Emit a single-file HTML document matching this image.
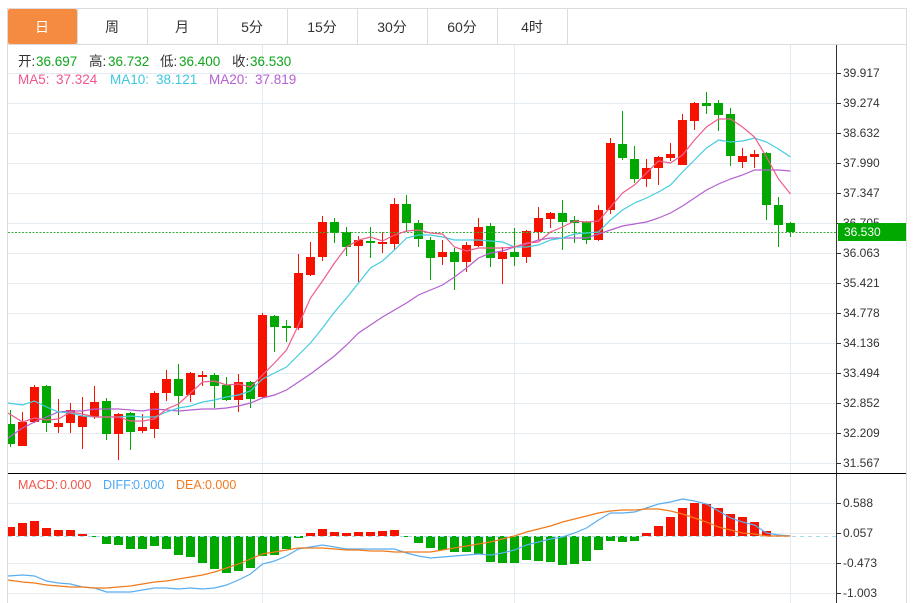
<!DOCTYPE html>
<html><head><meta charset="utf-8"><style>
html,body{margin:0;padding:0;background:#fff;width:915px;height:603px;overflow:hidden}
svg{display:block}
text{font-family:"Liberation Sans","Noto Sans CJK SC",sans-serif}
.t{font-size:14px;fill:#333;text-anchor:middle}
.a{font-size:12px;fill:#333}
.l{font-size:13.5px}
</style></head><body>
<svg width="915" height="603" viewBox="0 0 915 603" xmlns="http://www.w3.org/2000/svg">
<defs><clipPath id="c"><rect x="8" y="45" width="828" height="558"/></clipPath></defs>
<rect width="915" height="603" fill="#fff"/>
<!-- grid -->
<path d="M8 73.5H836M8 103.5H836M8 133.5H836M8 163.5H836M8 193.5H836M8 223.5H836M8 253.5H836M8 283.5H836M8 313.5H836M8 343.5H836M8 373.5H836M8 403.5H836M8 433.5H836M8 463.5H836M8 503.5H836M8 533.5H836M8 563.5H836M8 593.5H836M262.5 45V603M514.5 45V603M790.5 45V603" stroke="#e4ebf1" stroke-width="1" fill="none"/>
<!-- frame -->
<path d="M7 8.5H907M7.5 8V603M906.5 8V603M8 44.5H907M77.5 9V44M147.5 9V44M217.5 9V44M287.5 9V44M357.5 9V44M427.5 9V44M497.5 9V44M567.5 9V44" stroke="#dcdcdc" stroke-width="1" fill="none"/>
<rect x="8" y="9" width="69" height="35" rx="2" fill="#f58b41"/>
<text class="t" x="42" y="32" style="fill:#fff">日</text>
<text class="t" x="112" y="32">周</text>
<text class="t" x="182" y="32">月</text>
<text class="t" x="252" y="32">5分</text>
<text class="t" x="322" y="32">15分</text>
<text class="t" x="392" y="32">30分</text>
<text class="t" x="462" y="32">60分</text>
<text class="t" x="532" y="32">4时</text>
<!-- candles -->
<g clip-path="url(#c)">
<path fill="none" stroke="#f51300" stroke-width="1" d="M22.5 412V446M34.5 385V423M58.5 399V433M70.5 403V433M82.5 397V449M94.5 386V419M118.5 413V460M142.5 414V433M154.5 391V438M166.5 370V401M190.5 372V402M202.5 371V386M238.5 374V412M262.5 313V398M298.5 254V330M310.5 242V276M322.5 216V261M358.5 236V282M382.5 232V253M394.5 198V250M442.5 240V265M466.5 242V272M478.5 218V247M502.5 247V284M526.5 230V263M538.5 207V240M550.5 212V228M598.5 205V241M610.5 138V214M646.5 159V187M658.5 156V185M670.5 143V161M682.5 114V165M694.5 102V130M742.5 148V168M754.5 150V168"/>
<path fill="none" stroke="#00a800" stroke-width="1" d="M10.5 410V447M46.5 385V432M106.5 398V440M130.5 412V450M178.5 364V415M214.5 373V408M226.5 377V401M250.5 381V408M274.5 315V352M286.5 320V342M334.5 218V243M346.5 227V256M370.5 227V258M406.5 195V232M418.5 220V247M430.5 237V280M454.5 248V290M490.5 223V267M514.5 228V266M562.5 200V250M574.5 216V243M586.5 221V244M622.5 111V160M634.5 146V183M706.5 92V114M718.5 100V131M730.5 108V166M766.5 152V220M778.5 197V247M790.5 222V237"/>
<path fill="#f51300" d="M18 422h9v24h-9zM30 387h9v35h-9zM54 423h9v4h-9zM66 410h9v13h-9zM78 416h9v11h-9zM90 402h9v15h-9zM114 414h9v20h-9zM138 427h9v4h-9zM150 393h9v36h-9zM162 379h9v14h-9zM186 373h9v22h-9zM198 375h9v2h-9zM234 382h9v18h-9zM258 315h9v82h-9zM294 273h9v55h-9zM306 257h9v18h-9zM318 222h9v35h-9zM354 240h9v6h-9zM378 242h9v2h-9zM390 204h9v40h-9zM438 252h9v5h-9zM462 245h9v17h-9zM474 227h9v19h-9zM498 252h9v7h-9zM522 231h9v26h-9zM534 218h9v14h-9zM546 213h9v6h-9zM594 210h9v30h-9zM606 143h9v67h-9zM642 168h9v11h-9zM654 157h9v11h-9zM666 154h9v4h-9zM678 120h9v45h-9zM690 103h9v18h-9zM738 156h9v6h-9zM750 154h9v3h-9z"/>
<path fill="#00a800" d="M8 424h7v20h-7zM42 386h9v37h-9zM102 401h9v33h-9zM126 413h9v19h-9zM174 379h9v17h-9zM210 375h9v11h-9zM222 385h9v15h-9zM246 382h9v17h-9zM270 316h9v11h-9zM282 326h9v2h-9zM330 222h9v11h-9zM342 232h9v15h-9zM366 241h9v2h-9zM402 204h9v19h-9zM414 223h9v16h-9zM426 240h9v18h-9zM450 252h9v10h-9zM486 226h9v32h-9zM510 252h9v5h-9zM558 213h9v9h-9zM570 220h9v3h-9zM582 222h9v18h-9zM618 144h9v14h-9zM630 159h9v20h-9zM702 103h9v3h-9zM714 103h9v12h-9zM726 114h9v42h-9zM762 153h9v52h-9zM774 205h9v20h-9zM786 223h9v9h-9z"/>
<!-- price line -->
<path d="M8 232.5H836" stroke="#35b035" stroke-width="1" stroke-dasharray="2 1.5" fill="none"/>
<!-- MA -->
<polyline fill="none" stroke="#b45fcf" stroke-width="1.2" points="8,438 22.5,428 34.5,422 46.5,417 58.5,412 70.5,411 82.5,411 94.5,409 106.5,409 118.5,409 130.5,410 142.5,411 154.5,409 166.5,410 178.5,411 190.5,410 202.5,409 214.5,409 226.5,408 238.5,406 250.5,403 262.5,398 274.5,395 286.5,390 298.5,382 310.5,374 322.5,365 334.5,356 346.5,345 358.5,333 370.5,325 382.5,317 394.5,310 406.5,303 418.5,295 430.5,290 442.5,285 454.5,277 466.5,268 478.5,258 490.5,253 502.5,251 514.5,247 526.5,244 538.5,240 550.5,238 562.5,238 574.5,238 586.5,238 598.5,234 610.5,230 622.5,226 634.5,224 646.5,222 658.5,218 670.5,213 682.5,206 694.5,198 706.5,190 718.5,184 730.5,179 742.5,175 754.5,170 766.5,170 778.5,170 790.5,171"/>
<polyline fill="none" stroke="#45cde0" stroke-width="1.2" points="8,403 22.5,405 34.5,401 46.5,407 58.5,412 70.5,413 82.5,416 94.5,417 106.5,417 118.5,417 130.5,416 142.5,417 154.5,417 166.5,412 178.5,408 190.5,406 202.5,402 214.5,400 226.5,397 238.5,395 250.5,391 262.5,379 274.5,373 286.5,367 298.5,355 310.5,343 322.5,328 334.5,312 346.5,298 358.5,283 370.5,268 382.5,261 394.5,250 406.5,238 418.5,235 430.5,235 442.5,237 454.5,240 466.5,240 478.5,240 490.5,241 502.5,242 514.5,247 526.5,247 538.5,245 550.5,240 562.5,238 574.5,234 586.5,233 598.5,232 610.5,220 622.5,210 634.5,203 646.5,198 658.5,192 670.5,185 682.5,172 694.5,160 706.5,148 718.5,140 730.5,142 742.5,141 754.5,138 766.5,142 778.5,149 790.5,157"/>
<polyline fill="none" stroke="#ef5c8e" stroke-width="1.2" points="8,413 22.5,422 34.5,418 46.5,420 58.5,419 70.5,412 82.5,414 94.5,417 106.5,417 118.5,417 130.5,421 142.5,421 154.5,419 166.5,409 178.5,404 190.5,393 202.5,382 214.5,381 226.5,385 238.5,384 250.5,387 262.5,375 274.5,363 286.5,350 298.5,325 310.5,298 322.5,281 334.5,263 346.5,247 358.5,240 370.5,237 382.5,241 394.5,235 406.5,231 418.5,230 430.5,233 442.5,234 454.5,247 466.5,251 478.5,248 490.5,248 502.5,248 514.5,247 526.5,243 538.5,242 550.5,232 562.5,227 574.5,221 586.5,222 598.5,221 610.5,207 622.5,193 634.5,185 646.5,173 658.5,161 670.5,163 682.5,155 694.5,140 706.5,127 718.5,119 730.5,119 742.5,127 754.5,137 766.5,157 778.5,179 790.5,194"/>
<!-- MACD bars -->
<path fill="#f51300" d="M8 527h7v9h-7zM18 523h9v13h-9zM30 521h9v15h-9zM42 528h9v8h-9zM54 530h9v6h-9zM66 530h9v6h-9zM78 534h9v2h-9zM306 533h9v3h-9zM318 529h9v7h-9zM330 532h9v4h-9zM342 533h9v3h-9zM354 532h9v4h-9zM366 532h9v4h-9zM378 531h9v5h-9zM390 530h9v6h-9zM642 533h9v3h-9zM654 526h9v10h-9zM666 517h9v19h-9zM678 508h9v28h-9zM690 503h9v33h-9zM702 504h9v32h-9zM714 508h9v28h-9zM726 514h9v22h-9zM738 517h9v19h-9zM750 522h9v14h-9zM762 531h9v5h-9z"/>
<path fill="#00a800" d="M90 536h9v1h-9zM102 536h9v8h-9zM114 536h9v9h-9zM126 536h9v13h-9zM138 536h9v13h-9zM150 536h9v10h-9zM162 536h9v13h-9zM174 536h9v19h-9zM186 536h9v21h-9zM198 536h9v27h-9zM210 536h9v33h-9zM222 536h9v37h-9zM234 536h9v35h-9zM246 536h9v32h-9zM258 536h9v20h-9zM270 536h9v19h-9zM282 536h9v13h-9zM294 536h9v2h-9zM402 536h9v1h-9zM414 536h9v7h-9zM426 536h9v12h-9zM438 536h9v14h-9zM450 536h9v16h-9zM462 536h9v16h-9zM474 536h9v18h-9zM486 536h9v26h-9zM498 536h9v27h-9zM510 536h9v27h-9zM522 536h9v24h-9zM534 536h9v25h-9zM546 536h9v26h-9zM558 536h9v29h-9zM570 536h9v28h-9zM582 536h9v25h-9zM594 536h9v14h-9zM606 536h9v5h-9zM618 536h9v6h-9zM630 536h9v5h-9z"/>
<path d="M8 536.5H836" stroke="#a6dcf0" stroke-width="1" stroke-dasharray="4 4" fill="none"/>
<polyline fill="none" stroke="#5aaef0" stroke-width="1.2" points="8,576 22.5,575 34.5,576 46.5,581 58.5,583 70.5,584 82.5,587 94.5,588 106.5,592 118.5,592 130.5,592 142.5,590 154.5,588 166.5,588 178.5,589 190.5,588 202.5,589 214.5,588 226.5,585 238.5,580 250.5,574 262.5,564 274.5,561 286.5,556 298.5,549 310.5,547 322.5,545 334.5,547 346.5,549 358.5,549 370.5,549 382.5,549 394.5,549 406.5,553 418.5,556 430.5,558 442.5,557 454.5,556 466.5,555 478.5,554 490.5,555 502.5,553 514.5,550 526.5,545 538.5,542 550.5,539 562.5,537 574.5,533 586.5,528 598.5,520 610.5,513 622.5,513 634.5,512 646.5,508 658.5,504 670.5,502 682.5,499 694.5,501 706.5,504 718.5,511 730.5,518 742.5,522 754.5,525 766.5,533 778.5,535 790.5,536"/>
<polyline fill="none" stroke="#f07a1a" stroke-width="1.2" points="8,580 22.5,582 34.5,583 46.5,585 58.5,586 70.5,587 82.5,587 94.5,588 106.5,588 118.5,587 130.5,586 142.5,584 154.5,582 166.5,581 178.5,579 190.5,577 202.5,575 214.5,572 226.5,568 238.5,564 250.5,559 262.5,554 274.5,552 286.5,550 298.5,548 310.5,548 322.5,548 334.5,549 346.5,550 358.5,550 370.5,551 382.5,551 394.5,552 406.5,552 418.5,552 430.5,552 442.5,550 454.5,548 466.5,546 478.5,544 490.5,542 502.5,539 514.5,536 526.5,532 538.5,529 550.5,526 562.5,522 574.5,519 586.5,516 598.5,513 610.5,511 622.5,510 634.5,510 646.5,509 658.5,509 670.5,511 682.5,514 694.5,518 706.5,522 718.5,527 730.5,530 742.5,533 754.5,534 766.5,536 778.5,536 790.5,536"/>
</g>
<!-- axes -->
<path d="M836.5 45V603M837 73.5H841M837 103.5H841M837 133.5H841M837 163.5H841M837 193.5H841M837 223.5H841M837 253.5H841M837 283.5H841M837 313.5H841M837 343.5H841M837 373.5H841M837 403.5H841M837 433.5H841M837 463.5H841M837 503.5H841M837 533.5H841M837 563.5H841M837 593.5H841" stroke="#333" stroke-width="1" fill="none"/>
<path d="M8 473.5H906" stroke="#000" stroke-width="1" fill="none"/>
<g class="a">
<text class="a" x="843" y="77">39.917</text>
<text class="a" x="843" y="107">39.274</text>
<text class="a" x="843" y="137">38.632</text>
<text class="a" x="843" y="167">37.990</text>
<text class="a" x="843" y="197">37.347</text>
<text class="a" x="843" y="227">36.705</text>
<text class="a" x="843" y="257">36.063</text>
<text class="a" x="843" y="287">35.421</text>
<text class="a" x="843" y="317">34.778</text>
<text class="a" x="843" y="347">34.136</text>
<text class="a" x="843" y="377">33.494</text>
<text class="a" x="843" y="407">32.852</text>
<text class="a" x="843" y="437">32.209</text>
<text class="a" x="843" y="467">31.567</text>
<text class="a" x="843" y="507">0.588</text>
<text class="a" x="843" y="537">0.057</text>
<text class="a" x="843" y="567">-0.473</text>
<text class="a" x="843" y="597">-1.003</text>
</g>
<rect x="838" y="223" width="68" height="18" fill="#00a800"/>
<text class="a" x="844" y="236" style="fill:#fff">36.530</text>
<!-- legend -->
<g class="l">
<text class="l" x="18" y="66" fill="#333">开:</text><text class="l" x="36" y="66" fill="#0ea51b">36.697</text>
<text class="l" x="89" y="66" fill="#333">高:</text><text class="l" x="108" y="66" fill="#0ea51b">36.732</text>
<text class="l" x="160" y="66" fill="#333">低:</text><text class="l" x="179" y="66" fill="#0ea51b">36.400</text>
<text class="l" x="232" y="66" fill="#333">收:</text><text class="l" x="250" y="66" fill="#0ea51b">36.530</text>
<text class="l" x="18" y="84" fill="#f0558f">MA5:</text><text class="l" x="56" y="84" fill="#f0558f">37.324</text>
<text class="l" x="110" y="84" fill="#3ec8e0">MA10:</text><text class="l" x="156" y="84" fill="#3ec8e0">38.121</text>
<text class="l" x="209" y="84" fill="#b55fd0">MA20:</text><text class="l" x="255" y="84" fill="#b55fd0">37.819</text>
<text x="18" y="489" font-size="12.5" fill="#f0564a">MACD:</text><text x="60" y="489" font-size="12.5" fill="#f0564a">0.000</text>
<text x="103" y="489" font-size="12.5" fill="#4fa8f5">DIFF:</text><text x="133" y="489" font-size="12.5" fill="#4fa8f5">0.000</text>
<text x="176" y="489" font-size="12.5" fill="#f57a20">DEA:</text><text x="205" y="489" font-size="12.5" fill="#f57a20">0.000</text>
</g>
</svg>
</body></html>
